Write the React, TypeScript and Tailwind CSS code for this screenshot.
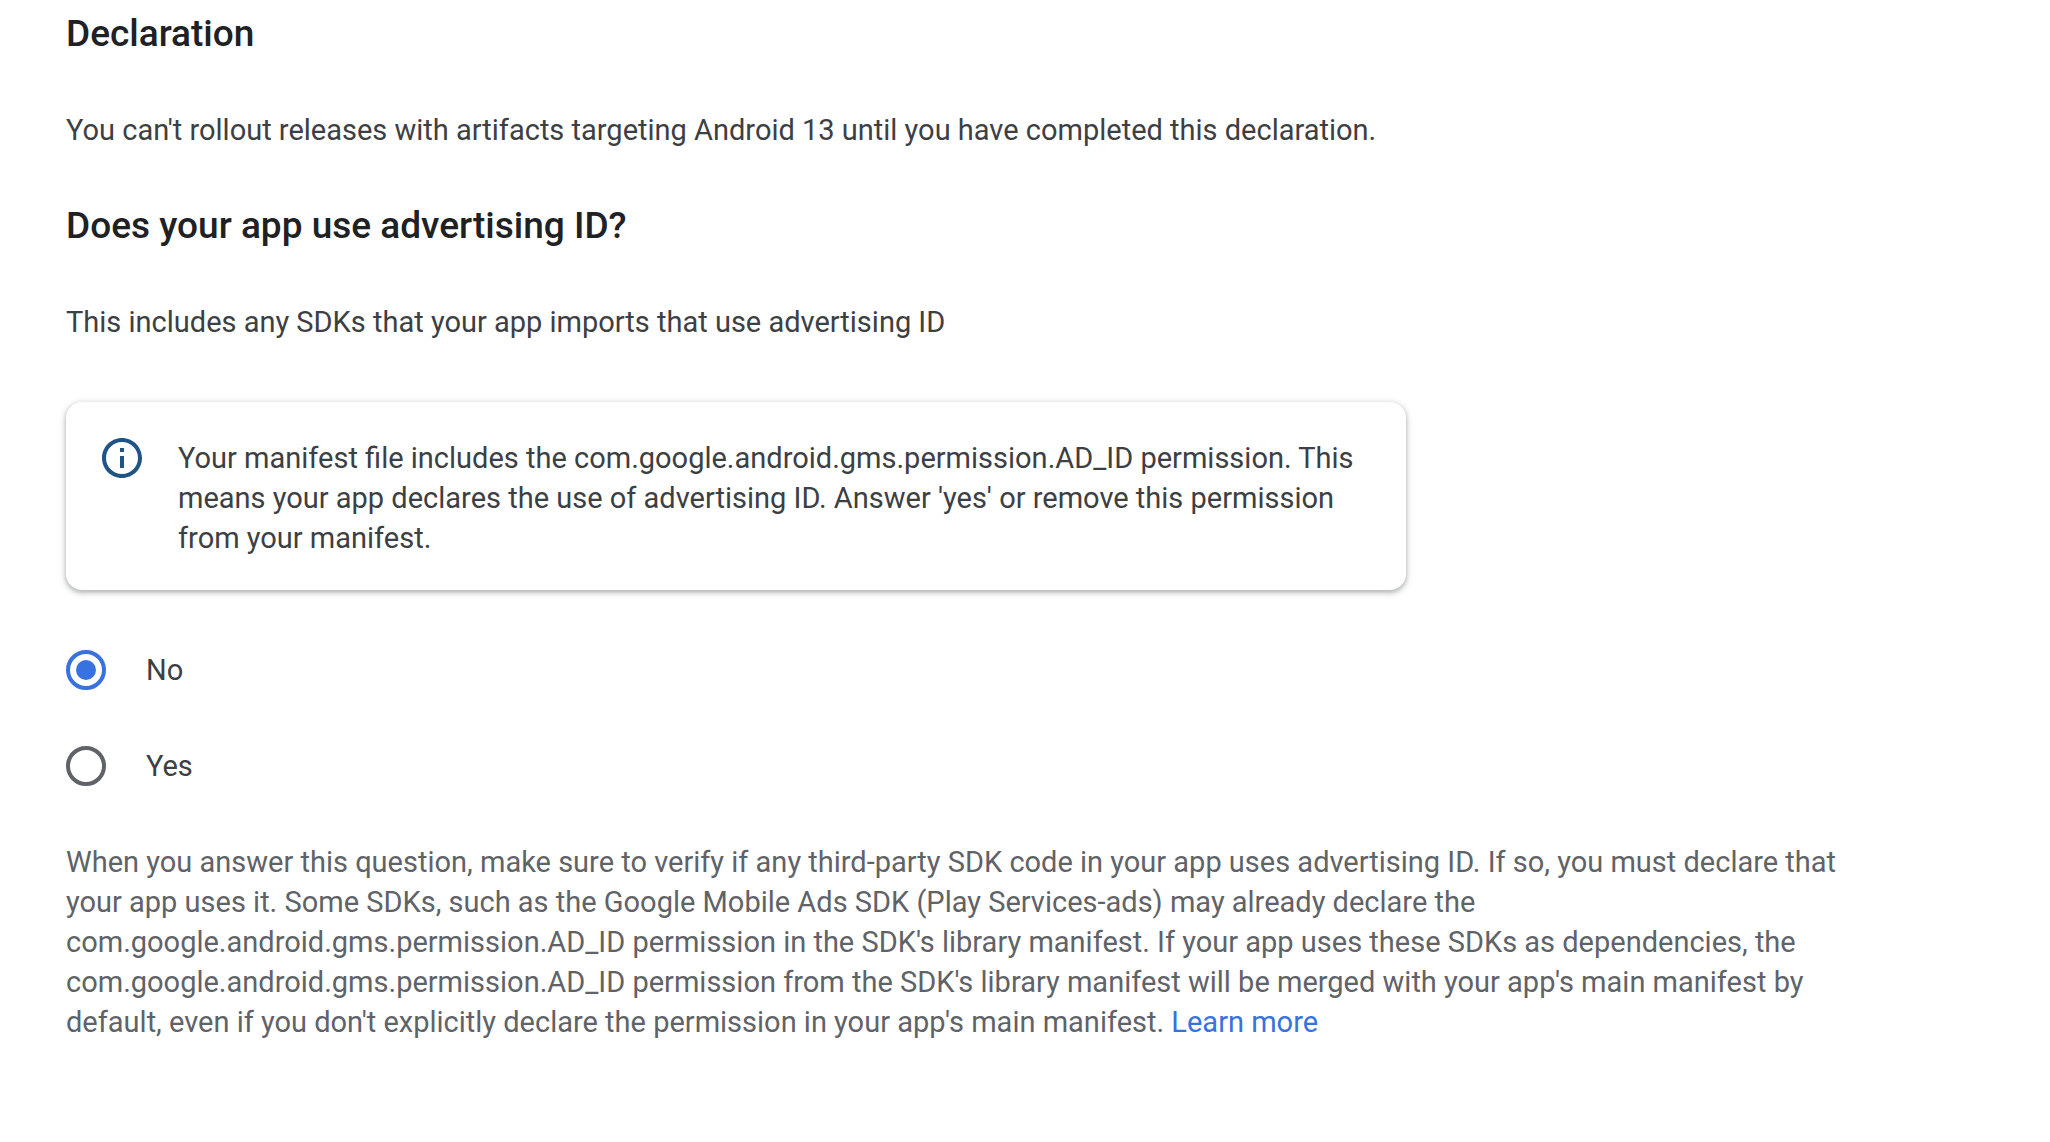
import { useState } from "react";

type Answer = "no" | "yes";

const OPTIONS: { value: Answer; label: string }[] = [
  { value: "no", label: "No" },
  { value: "yes", label: "Yes" },
];

function InfoIcon() {
  return (
    <svg viewBox="0 0 24 24" className="h-12 w-12 shrink-0 fill-[#215486]" aria-hidden="true">
      <path d="M11 7h2v2h-2zm0 4h2v6h-2zm1-9C6.48 2 2 6.48 2 12s4.48 10 10 10 10-4.48 10-10S17.52 2 12 2zm0 18c-4.41 0-8-3.59-8-8s3.59-8 8-8 8 3.59 8 8-3.59 8-8 8z" />
    </svg>
  );
}

function SectionTitle({ id, children }: { id?: string; children: string }) {
  return (
    <h2 id={id} className="text-[37px] leading-10 font-medium text-[#202124]">
      {children}
    </h2>
  );
}

export default function App() {
  const [answer, setAnswer] = useState<Answer>("no");

  return (
    <main className="min-h-screen bg-white px-[66px] pt-[14px] pb-12 font-[Roboto,sans-serif] text-[29px] leading-10 text-[#3c4043]">
      <div className="flex flex-col gap-14">
        <SectionTitle>Declaration</SectionTitle>
        <p>You can't rollout releases with artifacts targeting Android 13 until you have completed this declaration.</p>
        <SectionTitle id="ad-id-question">Does your app use advertising ID?</SectionTitle>
        <p>This includes any SDKs that your app imports that use advertising ID</p>
      </div>

      {/* Manifest notice */}
      <section className="my-[60px] flex max-w-[1340px] gap-8 rounded-2xl bg-white p-8 shadow-[0_2px_4px_rgba(60,64,67,0.3),0_2px_6px_2px_rgba(60,64,67,0.15)]">
        <InfoIcon />
        <p className="pt-1">
          Your manifest file includes the com.google.android.gms.permission.AD_ID permission. This means your app
          declares the use of advertising ID. Answer 'yes' or remove this permission from your manifest.
        </p>
      </section>

      <div role="radiogroup" aria-labelledby="ad-id-question" className="flex flex-col items-start gap-14">
        {OPTIONS.map((o) => (
          <label key={o.value} className="flex cursor-pointer items-center gap-10">
            <input
              type="radio"
              name="ad-id"
              value={o.value}
              checked={answer === o.value}
              onChange={() => setAnswer(o.value)}
              className="grid h-10 w-10 shrink-0 appearance-none place-items-center rounded-full border-4 border-[#5f6368] before:h-5 before:w-5 before:rounded-full checked:border-[#3871e0] checked:before:bg-[#3871e0]"
            />
            {o.label}
          </label>
        ))}
      </div>

      <p className="mt-14 max-w-[1780px] text-[#5f6368]">
        When you answer this question, make sure to verify if any third-party SDK code in your app uses advertising ID.
        If so, you must declare that your app uses it. Some SDKs, such as the Google Mobile Ads SDK (Play Services-ads)
        may already declare the com.google.android.gms.permission.AD_ID permission in the SDK's library manifest. If
        your app uses these SDKs as dependencies, the com.google.android.gms.permission.AD_ID permission from the SDK's
        library manifest will be merged with your app's main manifest by default, even if you don't explicitly declare
        the permission in your app's main manifest.{" "}
        <a href="#learn-more" className="text-[#3871e0]">
          Learn more
        </a>
      </p>
    </main>
  );
}
